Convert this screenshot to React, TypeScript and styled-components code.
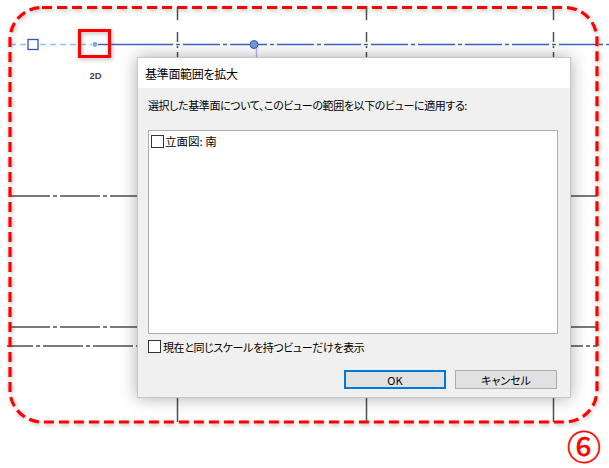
import React from 'react'
import styled, { createGlobalStyle } from 'styled-components';

const GlobalStyle = createGlobalStyle`
  html, body {
    margin: 0;
    padding: 0;
    background: #ffffff;
  }
  body {
    font-family: "Noto Sans CJK JP", "Noto Sans", sans-serif;
  }
`;

const GRID = '#4f4f4f';
const BLUE = '#3d63c5';

const Drawing: React.FC = () => {
  return (
    <Canvas width={609} height={468} viewBox="0 0 609 468">
      <defs>
        <filter id="soft" x="-5%" y="-5%" width="110%" height="110%">
          <feDropShadow dx="1" dy="1.5" stdDeviation="2" floodColor="#000" floodOpacity="0.3" />
        </filter>
      </defs>

      {/* level line */}
      <line x1="10" y1="44.5" x2="92" y2="44.5" stroke="#8cc6e6" strokeWidth="1.5" strokeDasharray="6 4" />
      <line x1="98" y1="44.5" x2="609" y2="44.5" stroke={BLUE} strokeWidth="1.5" strokeDasharray="75 3 4 3 37 3 4 3 37 3 4 3 37 3 4 3 37 3 4 3 37 3 4 3 37 3 4 3 37 3 4 3 37 3 4 3 37 3 4 3 37 3 4 3" />
      <rect x="28" y="39.5" width="10" height="10" fill="#fff" stroke="#2f55b3" strokeWidth="1.3" />
      <circle cx="95" cy="44.5" r="2.4" fill="#7ea6e0" />
      <text x="95.5" y="78.5" fontSize="9.5" fontWeight="bold" fill="#444" textAnchor="middle" fontFamily="'Liberation Sans', Arial, sans-serif">2D</text>
      <line x1="256.5" y1="48" x2="256.5" y2="58" stroke="#a8c0ee" strokeWidth="1.5" />
      <circle cx="254" cy="44.5" r="4" fill="#7898d8" stroke="#3a5ab8" strokeWidth="1" />

      {/* grid lines above the dialog */}
      {[177.5, 366.5, 553.5].map((x) => (
        <line key={x} x1={x} y1="7" x2={x} y2="58" stroke={GRID} strokeWidth="1.5" strokeDasharray="13 12 10 4 2 4 20" />
      ))}
      {/* grid lines below the dialog */}
      {[177.5, 366.5, 553.5].map((x) => (
        <line key={'b' + x} x1={x} y1="396" x2={x} y2="422" stroke={GRID} strokeWidth="1.5" />
      ))}

      {/* horizontal grid lines (the dialog covers the middle) */}
      <line x1="10" y1="196" x2="597" y2="196" stroke={GRID} strokeWidth="1.5" strokeDasharray="40 3 4 3" />
      <line x1="10" y1="327" x2="597" y2="327" stroke={GRID} strokeWidth="1.5" strokeDasharray="40 3 4 3" />
      <line x1="7" y1="346" x2="597" y2="346" stroke={GRID} strokeWidth="1.5" strokeDasharray="26 3 4 3 40 3 4 3 40 3 4 3 40 3 4 3 40 3 4 3 40 3 4 3 40 3 4 3 40 3 4 3 40 3 4 3 40 3 4 3 40 3 4 3 40 3 4 3 22 3 4 3" />

      {/* annotation marks */}
      <g filter="url(#soft)">
        <rect x="79.5" y="30.5" width="30" height="26" fill="none" stroke="#ff0000" strokeWidth="3" />
        <rect x="10" y="7.5" width="587" height="414.5" rx="32" fill="none" stroke="#ff0000" strokeWidth="3.2" strokeDasharray="10 5" />
      </g>
    </Canvas>
  );
};

const App: React.FC = () => {
  return (
    <Stage>
      <GlobalStyle />
      <Drawing />
      <Dialog>
        <TitleBar>基準面範囲を拡大</TitleBar>
        <Body>
          <Prompt>選択した基準面について、このビューの範囲を以下のビューに適用する:</Prompt>
          <ListBox>
            <CheckRow>
              <Box />
              <span>立面図: 南</span>
            </CheckRow>
          </ListBox>
          <OptionRow>
            <Box />
            <span>現在と同じスケールを持つビューだけを表示</span>
          </OptionRow>
          <Buttons>
            <Button $primary>OK</Button>
            <Button>キャンセル</Button>
          </Buttons>
        </Body>
      </Dialog>
      <Marker>⑥</Marker>
    </Stage>
  );
};

export default App;

const Stage = styled.div`
    position: relative;
    width: 609px;
    height: 468px;
    overflow: hidden;
    background: #ffffff;
`;
const Canvas = styled.svg`
    position: absolute;
    left: 0;
    top: 0;
    display: block;
`;
const Dialog = styled.div`
    position: absolute;
    left: 137px;
    top: 57px;
    width: 434px;
    height: 341px;
    box-sizing: border-box;
    border: 1px solid #c6c6c6;
    background: #f0f0f0;
    box-shadow: 0 0 16px rgba(0, 0, 0, 0.32);
    display: flex;
    flex-direction: column;
    font-family: "Noto Sans CJK JP", "Noto Sans", sans-serif;
    font-feature-settings: "palt";
    color: #000;
`;
const TitleBar = styled.div`
    height: 30px;
    background: #ffffff;
    display: flex;
    align-items: center;
    padding-left: 7px;
    font-size: 12px;
    letter-spacing: -0.3px;
`;
const Body = styled.div`
    flex: 1;
    display: flex;
    flex-direction: column;
    padding: 10px 12px 0 10px;
    font-size: 11px;
    letter-spacing: -0.4px;
`;
const Prompt = styled.div`
    height: 14px;
    line-height: 14px;
    white-space: nowrap;
`;
const ListBox = styled.div`
    margin-top: 18px;
    height: 204px;
    box-sizing: border-box;
    background: #ffffff;
    border: 1px solid #adadb4;
    padding: 3px 2px;
`;
const CheckRow = styled.div`
    display: flex;
    align-items: center;
    gap: 1px;
    height: 14px;
    font-size: 11.5px;
    letter-spacing: 0;
    white-space: nowrap;
`;
const Box = styled.span`
    width: 13px;
    height: 13px;
    box-sizing: border-box;
    border: 1px solid #333333;
    background: #ffffff;
    flex-shrink: 0;
`;
const OptionRow = styled.div`
    margin-top: 6px;
    display: flex;
    align-items: center;
    gap: 2px;
    height: 13px;
    white-space: nowrap;
`;
const Buttons = styled.div`
    margin-top: 17px;
    display: flex;
    justify-content: flex-end;
    gap: 9px;
    padding-right: 1px;
`;
const Button = styled.div<{ $primary?: boolean }>`
    width: 102px;
    height: 19px;
    box-sizing: border-box;
    background: #e1e1e1;
    border: ${(p) => (p.$primary ? '2px solid #0078d7' : '1px solid #adadad')};
    display: flex;
    align-items: center;
    justify-content: center;
    font-size: 11px;
    letter-spacing: 0;
`;
const Marker = styled.div`
    position: absolute;
    left: 562px;
    top: 426px;
    width: 44px;
    height: 40px;
    display: flex;
    align-items: center;
    justify-content: center;
    font-size: 34px;
    line-height: 1;
    color: #ff0000;
    -webkit-text-stroke: 0.6px #ff0000;
    font-family: "Noto Sans CJK JP", sans-serif;
`;
